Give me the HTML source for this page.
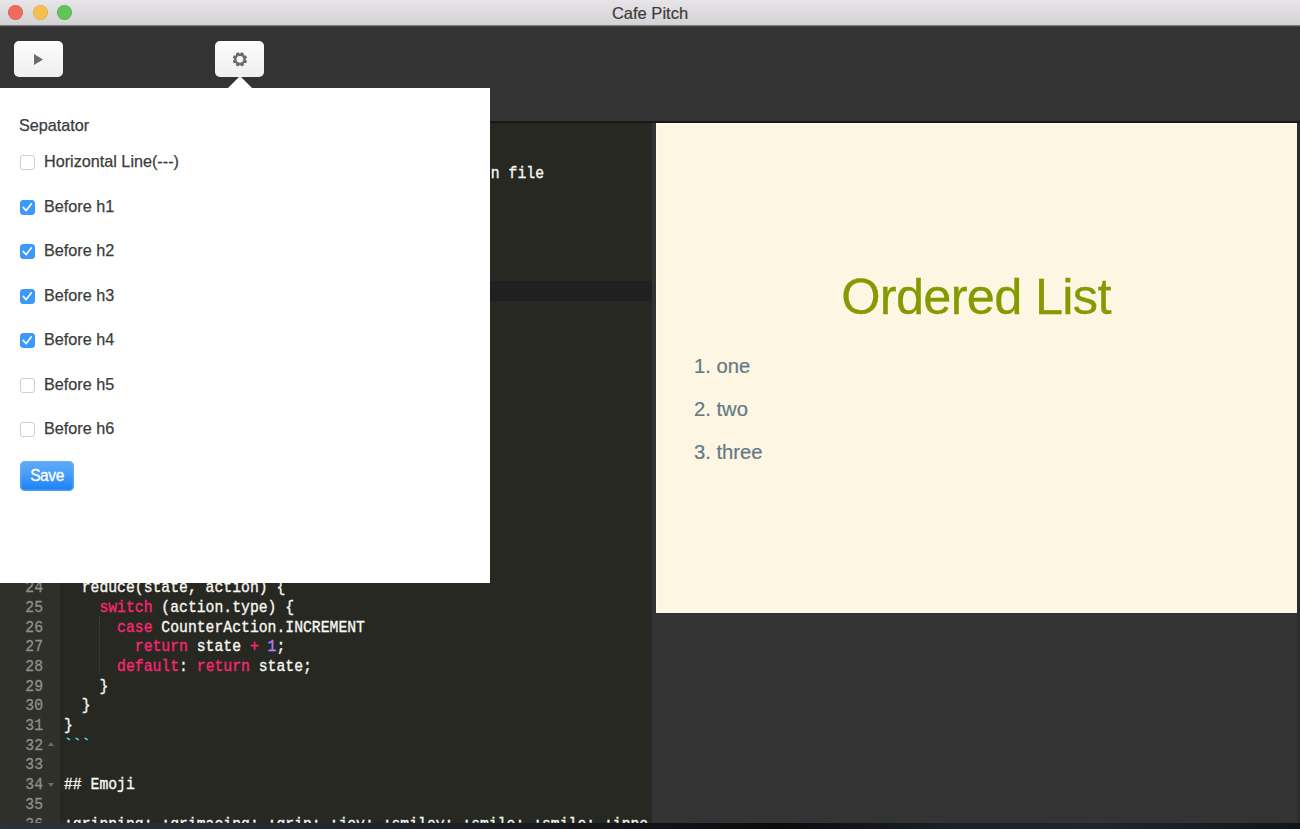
<!DOCTYPE html>
<html><head><meta charset="utf-8">
<style>
*{margin:0;padding:0;box-sizing:border-box}
html,body{width:1300px;height:829px;overflow:hidden;background:linear-gradient(90deg,#2b3039 0px,#262a33 250px,#14161b 600px,#0b0b0d 780px,#1b1f27 950px,#20252e 1100px,#11141a 1300px);font-family:"Liberation Sans",sans-serif}
#win{position:absolute;left:0;top:0;width:1300px;height:823px;background:#333;overflow:hidden}
#title{position:absolute;left:0;top:0;width:1300px;height:25px;background:linear-gradient(#e7e5e8,#d4d2d5)}
#title .t{position:absolute;left:0;width:1300px;top:3.5px;text-align:center;font-size:16.5px;color:#3c3c3c;-webkit-text-stroke:0.2px #3c3c3c}
.dot{position:absolute;top:5px;width:15px;height:15px;border-radius:50%;box-shadow:inset 0 0 0 0.6px rgba(0,0,0,0.12)}
#toolbar{position:absolute;left:0;top:25px;width:1300px;height:97px;background:linear-gradient(#9a999b 0px,#5a5a5a 1px,#2e2e2e 2px,#333 3px)}
#tbline{position:absolute;left:0;top:121px;width:1300px;height:2px;background:linear-gradient(#242424,#121212 50%,#151614)}
.btn{position:absolute;top:41px;width:49px;height:36px;border-radius:5px;background:linear-gradient(#fdfdfd,#efefef)}
#editor{position:absolute;left:0;top:123px;width:652px;height:700px;background:#282823;overflow:hidden}
#gutter{position:absolute;left:0;top:0;width:60px;height:700px;background:#2f302a}
.ln{position:absolute;left:0;width:43px;text-align:right;font-family:"Liberation Mono",monospace;font-size:14.75px;color:#8f908a;height:19.7px;line-height:19.7px;margin-top:3.0px;transform:scaleY(1.15);transform-origin:0 13.7px;-webkit-text-stroke:0.25px #8f908a}
.cl{position:absolute;left:64px;white-space:pre;font-family:"Liberation Mono",monospace;font-size:14.75px;color:#f8f8f2;height:19.7px;line-height:19.7px;margin-top:3.0px;transform:scaleY(1.15);transform-origin:0 13.7px;-webkit-text-stroke:0.3px}
.k{color:#f92672}.n{color:#ae81ff}.c{color:#66d9ef}
#preview{position:absolute;left:656px;top:123px;width:641px;height:490px;background:#fdf6e3;box-shadow:inset 1px 2px 0 rgba(255,253,235,0.8)}
#preview h1{position:absolute;left:0;width:640px;top:144px;text-align:center;font-weight:normal;font-size:50.5px;letter-spacing:-0.7px;color:#859900;-webkit-text-stroke:0.3px #859900}
.li{position:absolute;left:694px;font-size:20.2px;color:#627a84;-webkit-text-stroke:0.2px #627a84}
#pop{position:absolute;left:0;top:88px;width:490px;height:495px;background:#fff}
#arrow{position:absolute;left:228.3px;top:75.5px;width:0;height:0;border-left:12.5px solid transparent;border-right:12.5px solid transparent;border-bottom:12.5px solid #fff}
.lab{position:absolute;left:44px;font-size:16.2px;color:#3c3c3c;-webkit-text-stroke:0.25px #3c3c3c;margin-top:-2.1px}
.cb{position:absolute;left:20px;width:15px;height:15px;border-radius:3px;border:1px solid #cfcfcf;background:#fff}
.ck{position:absolute;left:-1px;top:-1px}.ck path{fill:none;stroke:#fff;stroke-width:1.6;stroke-linecap:round;stroke-linejoin:round}
.cb.on{background:#3b99fc;border-color:#3b99fc}
#save{position:absolute;left:20px;top:373px;width:54px;height:30px;border-radius:5px;background:linear-gradient(#5eaaf9,#4a9ff8 40%,#2587f8 85%,#1a7cf3);box-shadow:inset 0 0 0 1.5px rgba(110,180,250,0.55);color:#fff;font-size:15.5px;letter-spacing:-0.4px;text-align:center;line-height:30px;-webkit-text-stroke:0.3px #fff}
</style></head><body>
<div id="win">
  <div id="title">
    <div class="dot" style="left:8px;background:#ed6a5e"></div>
    <div class="dot" style="left:33px;background:#f5bf4f"></div>
    <div class="dot" style="left:57.3px;background:#61c454"></div>
    <div class="t">Cafe Pitch</div>
  </div>
  <div id="toolbar"></div>
  <div id="tbline"></div>
  <div class="btn" style="left:14px">
    <svg width="49" height="36" style="position:absolute;left:0;top:0"><path d="M20 13 L29 18.5 L20 24 Z" fill="#6b6b6b"/></svg>
  </div>
  <div class="btn" style="left:215px">
    <svg width="49" height="36" style="position:absolute;left:0;top:0"><path transform="translate(24.9,18.3)" fill="#6b6b6b" fill-rule="evenodd" d="M0.35 -5.69 L1.58 -7.13 L3.92 -6.16 L3.78 -4.27 L4.27 -3.78 L6.16 -3.92 L7.13 -1.58 L5.69 -0.35 L5.69 0.35 L7.13 1.58 L6.16 3.92 L4.27 3.78 L3.78 4.27 L3.92 6.16 L1.58 7.13 L0.35 5.69 L-0.35 5.69 L-1.58 7.13 L-3.92 6.16 L-3.78 4.27 L-4.27 3.78 L-6.16 3.92 L-7.13 1.58 L-5.69 0.35 L-5.69 -0.35 L-7.13 -1.58 L-6.16 -3.92 L-4.27 -3.78 L-3.78 -4.27 L-3.92 -6.16 L-1.58 -7.13 L-0.35 -5.69 Z M3.40 0 A3.40 3.40 0 1 0 -3.40 0 A3.40 3.40 0 1 0 3.40 0 Z"/></svg>
  </div>

  <div id="editor">
    <div id="gutter"></div>
    <div style="position:absolute;left:60px;top:157.8px;width:592px;height:20px;background:#202020"></div>
    <div class="cl" style="top:39px;left:66px">                                                n file</div>
    <div style="position:absolute;left:99px;top:492.8px;width:0;height:58.6px;border-left:1px dotted #46463e"></div>
    <div style="position:absolute;left:48px;top:618.8px;width:0;height:0;border-left:3.3px solid transparent;border-right:3.3px solid transparent;border-bottom:4.3px solid #6d6d66"></div>
    <div style="position:absolute;left:48px;top:659.6px;width:0;height:0;border-left:3.3px solid transparent;border-right:3.3px solid transparent;border-top:4.2px solid #6d6d66"></div>
    <div class="ln" style="top:453.1px">24</div><div class="cl" style="top:453.1px">  reduce(state, action) {</div>
    <div class="ln" style="top:472.8px">25</div><div class="cl" style="top:472.8px">    <span class="k">switch</span> (action.type) {</div>
    <div class="ln" style="top:492.5px">26</div><div class="cl" style="top:492.5px">      <span class="k">case</span> CounterAction.INCREMENT</div>
    <div class="ln" style="top:512.2px">27</div><div class="cl" style="top:512.2px">        <span class="k">return</span> state <span class="k">+</span> <span class="n">1</span>;</div>
    <div class="ln" style="top:531.9px">28</div><div class="cl" style="top:531.9px">      <span class="k">default</span>: <span class="k">return</span> state;</div>
    <div class="ln" style="top:551.6px">29</div><div class="cl" style="top:551.6px">    }</div>
    <div class="ln" style="top:571.3px">30</div><div class="cl" style="top:571.3px">  }</div>
    <div class="ln" style="top:591px">31</div><div class="cl" style="top:591px">}</div>
    <div class="ln" style="top:610.7px">32</div><div class="cl" style="top:610.7px"><span class="c">```</span></div>
    <div class="ln" style="top:630.4px">33</div>
    <div class="ln" style="top:650.1px">34</div><div class="cl" style="top:650.1px">## Emoji</div>
    <div class="ln" style="top:669.8px">35</div>
    <div class="ln" style="top:689.5px">36</div><div class="cl" style="top:689.5px">:grinning: :grimacing: :grin: :joy: :smiley: :smile: :smile: :inno</div>
  </div>

  <div style="position:absolute;left:1297px;top:123px;width:3px;height:700px;background:#2d2d2d"></div>
  <div id="preview">
    <h1>Ordered List</h1>
  </div>
  <div class="li" style="top:355px">1. one</div>
  <div class="li" style="top:397.7px">2. two</div>
  <div class="li" style="top:440.6px">3. three</div>

  <div id="arrow"></div>
  <div id="pop">
    <div class="lab" style="top:30.3px;left:19px">Sepatator</div>
    <div class="cb" style="top:67px"></div><div class="lab" style="top:66px">Horizontal Line(---)</div>
    <div class="cb on" style="top:112px"><svg class="ck" width="15" height="15"><path d="M3.2 7.4 L6.2 10.6 L11.4 3.8" /></svg></div><div class="lab" style="top:111px">Before h1</div>
    <div class="cb on" style="top:156px"><svg class="ck" width="15" height="15"><path d="M3.2 7.4 L6.2 10.6 L11.4 3.8" /></svg></div><div class="lab" style="top:155px">Before h2</div>
    <div class="cb on" style="top:201px"><svg class="ck" width="15" height="15"><path d="M3.2 7.4 L6.2 10.6 L11.4 3.8" /></svg></div><div class="lab" style="top:200px">Before h3</div>
    <div class="cb on" style="top:245px"><svg class="ck" width="15" height="15"><path d="M3.2 7.4 L6.2 10.6 L11.4 3.8" /></svg></div><div class="lab" style="top:244px">Before h4</div>
    <div class="cb" style="top:290px"></div><div class="lab" style="top:289px">Before h5</div>
    <div class="cb" style="top:334px"></div><div class="lab" style="top:333px">Before h6</div>
    <div id="save"><span style="display:inline-block;transform:scaleY(1.12);transform-origin:50% 60%;position:relative;top:0.3px">Save</span></div>
  </div>
</div>
</body></html>
